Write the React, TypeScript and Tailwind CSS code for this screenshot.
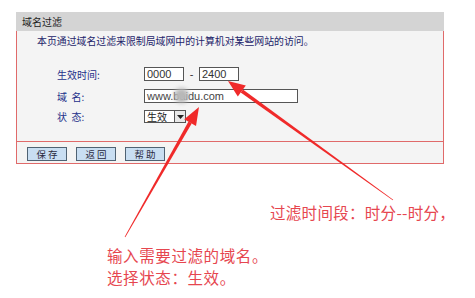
export default function App() {
    const cjk = { fontFamily: '"Noto Sans CJK SC", "Noto Sans", sans-serif' };
    const latin = { fontFamily: '"Liberation Sans", Arial, sans-serif' };

    return (
        <div className="relative w-[475px] h-[298px] bg-white overflow-hidden" style={cjk}>
            {/* Panel */}
            <div className="pt-[12px] pl-[16px]">
                <div className="w-[428px]">
                    <div className="h-[19px] bg-[#d4d4d4] pl-[6px] flex items-center text-[10px] text-[#222]">
                        域名过滤
                    </div>
                    <div className="bg-[#f4f4f4] border-l border-r border-b border-[#e06a6a]">
                        <div className="pt-[4px] pl-[20px] h-[36px] text-[9.9px] leading-[12px] text-[#23246a]">
                            本页通过域名过滤来限制局域网中的计算机对某些网站的访问。
                        </div>
                        <div className="flex flex-col gap-[8px] pb-[18px]">
                            <div className="flex items-center h-[14px]">
                                <div className="w-[127px] pl-[40px] text-[10px] text-[#23308a]">生效时间:</div>
                                <div className="w-[40px] h-[14px] border border-[#555] bg-white px-[2px] flex items-center text-[11px] text-[#333]" style={latin}>0000</div>
                                <div className="w-[15px] text-center text-[11px] text-[#333]" style={latin}>-</div>
                                <div className="w-[40px] h-[14px] border border-[#555] bg-white px-[2px] flex items-center text-[11px] text-[#333]" style={latin}>2400</div>
                            </div>
                            <div className="flex items-center h-[14px]">
                                <div className="w-[127px] pl-[40px] text-[10px] text-[#23308a]">域&nbsp;&nbsp;名:</div>
                                <div className="relative w-[154px] h-[14px] border border-[#555] bg-white px-[2px] flex items-center text-[11px] text-[#444]" style={latin}>
                                    www.baidu.com
                                    <div className="absolute left-[29px] top-[-2px] w-[15px] h-[15px] rounded-full bg-[#b8b8b8] blur-[2px]" />
                                </div>
                            </div>
                            <div className="flex items-center h-[13px] -mt-[1px]">
                                <div className="w-[127px] pl-[40px] text-[10px] text-[#23308a]">状&nbsp;&nbsp;态:</div>
                                <div className="flex h-[13px] border border-[#555] bg-white">
                                    <div className="w-[29px] pl-[2px] text-[10px] leading-[11px] text-[#222]">生效</div>
                                    <div className="w-[11px] border-l border-[#555] bg-[#e8e8e8] flex items-center justify-center">
                                        <svg width="7" height="4" viewBox="0 0 7 4"><path d="M0 0h7L3.5 4z" fill="#222" /></svg>
                                    </div>
                                </div>
                            </div>
                        </div>
                        <div className="border-t border-[#e06a6a] h-[22px] pl-[10px] pt-[5px] flex gap-[9px]">
                            {['保 存', '返 回', '帮 助'].map((b) => (
                                <div key={b} className="w-[40px] h-[14px] border border-[#4f6273] bg-[#c9def2] flex items-center justify-center text-[9.5px] text-[#2a2a40] whitespace-pre">
                                    {b}
                                </div>
                            ))}
                        </div>
                    </div>
                </div>
            </div>

            {/* Annotations */}
            <div className="pl-[270px] mt-[37px] text-[15.5px] leading-[22px] text-[#e6464f] tracking-[0.3px]">
                过滤时间段：时分--时分，
            </div>
            <div className="pl-[107px] mt-[21px] text-[15.5px] leading-[22px] text-[#e6464f] tracking-[0.6px]">
                <div>输入需要过滤的域名。</div>
                <div>选择状态：生效。</div>
            </div>

            {/* Arrows */}
            <svg className="absolute left-0 top-0 pointer-events-none" width="475" height="298" viewBox="0 0 475 298">
                <polygon points="242.9,89.4 240.7,92.6 392.8,200.3 393.2,199.7" fill="#f02a2a" />
                <polygon points="228,81 245.8,85.4 237.8,96.6" fill="#f02a2a" />
                <polygon points="191.7,123.6 188.5,121.6 124.7,236.8 125.3,237.2" fill="#f02a2a" />
                <polygon points="199,107 196,126 184.2,119.2" fill="#f02a2a" />
            </svg>
        </div>
    );
}
